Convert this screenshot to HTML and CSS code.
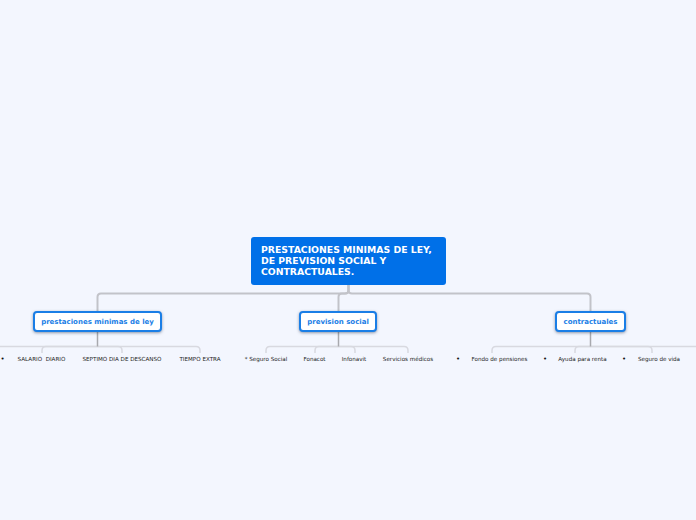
FILE: index.html
```html
<!DOCTYPE html>
<html lang="es">
<head>
<meta charset="utf-8">
<title>Prestaciones</title>
<link rel="stylesheet" href="styles.css">
</head>
<body>
<main class="map">
<svg class="links" width="696" height="520" viewBox="0 0 696 520" fill="none">
<g class="l1">
<path d="M348.500 285V290Q348.500 293.500 345 293.500H101Q97.500 293.500 97.500 297V312"/>
<path d="M348.500 285V290Q348.500 293.500 345 293.500H342Q338.500 293.500 338.500 297V312"/>
<path d="M348.500 285V290Q348.500 293.500 352 293.500H587Q590.500 293.500 590.500 297V312"/>
</g>
<g class="l3">
<path d="M97.500 346.500H0"/>
<path d="M97.500 346.500H46Q42 346.500 42 350.500V353"/>
<path d="M97.500 346.500H118Q122 346.500 122 350.500V353"/>
<path d="M97.500 346.500H196Q200 346.500 200 350.500V353"/>
<path d="M338.500 346.500H270Q266 346.500 266 350.500V353"/>
<path d="M338.500 346.500H319Q315 346.500 315 350.500V353"/>
<path d="M338.500 346.500H351Q355 346.500 355 350.500V353"/>
<path d="M338.500 346.500H404Q408 346.500 408 350.500V353"/>
<path d="M590.500 346.500H496Q492 346.500 492 350.500V353"/>
<path d="M590.500 346.500H579Q575 346.500 575 350.500V353"/>
<path d="M590.500 346.500H648Q652 346.500 652 350.500V353"/>
<path d="M590.500 346.500H696"/>
</g>
<g class="l2">
<path d="M97.500 332V346.500"/>
<path d="M338.500 332V346.500"/>
<path d="M590.500 332V346.500"/>
</g>
</svg>

<h1 class="node root">PRESTACIONES MINIMAS DE LEY, DE PREVISION SOCIAL Y CONTRACTUALES.</h1>

<div class="node branch b1">prestaciones minimas de ley</div>
<div class="node branch b2">prevision social</div>
<div class="node branch b3">contractuales</div>

<span class="leaf dot d0">•</span>
<span class="leaf t1">SALARIO&nbsp; DIARIO</span>
<span class="leaf t2">SEPTIMO DIA DE DESCANSO</span>
<span class="leaf t3">TIEMPO EXTRA</span>

<span class="leaf t4">* Seguro Social</span>
<span class="leaf t5">Fonacot</span>
<span class="leaf t6">Infonavit</span>
<span class="leaf t7">Servicios médicos</span>

<span class="leaf dot d1">•</span>
<span class="leaf t8">Fondo de pensiones</span>
<span class="leaf dot d2">•</span>
<span class="leaf t9">Ayuda para renta</span>
<span class="leaf dot d3">•</span>
<span class="leaf t10">Seguro de vida</span>
</main>
</body>
</html>
```
FILE: styles.css
```css
html, body {
  margin: 0;
  padding: 0;
  height: 100%;
  overflow: hidden;
  background: #f3f6fe;
}

.map {
  position: relative;
  width: 696px;
  height: 520px;
  overflow: hidden;
  font-family: "DejaVu Sans", Verdana, sans-serif;
}

.links {
  position: absolute;
  left: 0;
  top: 0;
}

.l1 path {
  stroke: #c2c3c9;
  stroke-width: 2;
}

.l2 path {
  stroke: #a8a9ae;
  stroke-width: 1.500;
}

.l3 path {
  stroke: #d8d9e0;
  stroke-width: 1.500;
}

.node {
  position: absolute;
  box-sizing: border-box;
  margin: 0;
  font-weight: 700;
}

.root {
  left: 251px;
  top: 237px;
  width: 195px;
  height: 48px;
  padding: 7px 10px;
  background: #0070e8;
  border-radius: 3px;
  color: #fff;
  font-size: 9.300px;
  line-height: 11px;
}

.branch {
  top: 311px;
  height: 21px;
  background: #fff;
  border: 2px solid #1a7ee6;
  border-radius: 4px;
  box-shadow: 0 1px 3px rgba(40, 60, 90, .5);
  color: #1a7ee6;
  font-size: 7px;
  line-height: 18px;
  text-align: center;
  white-space: nowrap;
}

.b1 { left: 33px; width: 129px; }
.b2 { left: 299px; width: 78px; }
.b3 { left: 555px; width: 71px; }

.leaf {
  position: absolute;
  top: 355px;
  width: 100px;
  padding-top: 1px;
  color: #222;
  font-size: 5.600px;
  line-height: 7px;
  text-align: center;
  white-space: nowrap;
}

.dot {
  color: #111;
  font-size: 7px;
}

.d0 { left: -47.500px; }
.d1 { left: 408px; }
.d2 { left: 495px; }
.d3 { left: 574px; }

.t1 { left: -8.500px; }
.t2 { left: 72px; }
.t3 { left: 150px; }
.t4 { left: 216px; }
.t5 { left: 264.500px; }
.t6 { left: 304px; }
.t7 { left: 358px; }
.t8 { left: 449.500px; }
.t9 { left: 532.500px; }
.t10 { left: 609px; }
```
